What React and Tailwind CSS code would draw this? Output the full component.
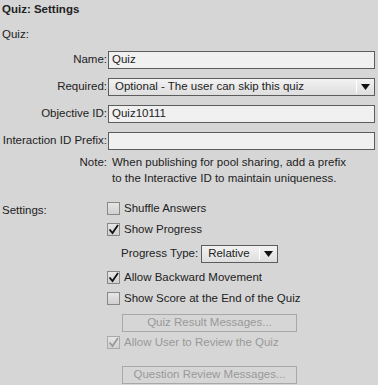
const font = { fontFamily: '"Liberation Sans", Arial, sans-serif' }

function Arrow({ dim }) {
  return (
    <svg width="9" height="6" viewBox="0 0 9 6">
      <path d="M0 0h9L4.5 6z" fill={dim ? '#999' : '#111'} />
    </svg>
  )
}

function Select({ value, className }) {
  return (
    <div className={`h-[18px] border border-[#5c5c5c] bg-gradient-to-b from-[#f2f2f2] to-[#dedede] flex items-center ${className}`}>
      <span className="flex-1 pl-[6px] truncate">{value}</span>
      <span className="w-px h-[12px] bg-[#aaa] border-r border-white"></span>
      <span className="w-[17px] flex items-center justify-center"><Arrow /></span>
    </div>
  )
}

function Check({ checked, disabled, label }) {
  return (
    <div className={`flex items-center gap-[4px] h-[21px] ${disabled ? 'text-[#999]' : ''}`}>
      <span className={`w-[13px] h-[13px] border ${disabled ? 'border-[#aaa]' : 'border-[#888]'} bg-gradient-to-b from-[#e6e6e6] to-[#d0d0d0] flex items-center justify-center`}>
        {checked && (
          <svg width="11" height="11" viewBox="0 0 11 11">
            <path d="M1.5 5.5l3 3.5L10 1" fill="none" stroke={disabled ? '#999' : '#111'} strokeWidth="1.8" />
          </svg>
        )}
      </span>
      <span>{label}</span>
    </div>
  )
}

function Row({ label, children }) {
  return (
    <div className="flex items-center h-[27px]">
      <span className="w-[106px] text-right pr-[1px] shrink-0 whitespace-nowrap">{label}</span>
      <div className="flex-1">{children}</div>
    </div>
  )
}

function Field({ value }) {
  return (
    <div className="h-[18px] border border-[#5c5c5c] bg-[#f0f0f0] flex items-center pl-[3px]">{value}</div>
  )
}

export default function App() {
  return (
    <div style={font} className="w-[378px] h-[385px] bg-[#d6d6d6] text-[11.5px] text-[#222] overflow-hidden pl-[2px] pr-[3px] whitespace-nowrap">
      <div className="font-bold h-[20px] pt-[1px]">Quiz: Settings</div>
      <div className="h-[25px] pt-[6px]">Quiz:</div>
      <div className="pt-[1px]">
        <Row label="Name:"><Field value="Quiz" /></Row>
        <Row label="Required:"><Select value="Optional - The user can skip this quiz" /></Row>
        <Row label="Objective ID:"><Field value="Quiz10111" /></Row>
        <Row label="Interaction ID Prefix:"><Field value="" /></Row>
      </div>
      <div className="flex leading-[16px]">
        <span className="w-[106px] text-right pr-[1px] shrink-0">Note:</span>
        <span className="pl-[4px]">When publishing for pool sharing, add a prefix<br />to the Interactive ID to maintain uniqueness.</span>
      </div>
      <div className="flex mt-[12px]">
        <span className="w-[105px] shrink-0 pt-[4px]">Settings:</span>
        <div className="flex flex-col">
          <Check label="Shuffle Answers" />
          <Check checked label="Show Progress" />
          <div className="flex items-center gap-[3px] h-[27px] pl-[14px]">
            <span>Progress Type:</span>
            <Select value="Relative" className="w-[77px]" />
          </div>
          <Check checked label="Allow Backward Movement" />
          <Check label="Show Score at the End of the Quiz" />
          <div className="h-[23px] flex items-end pl-[15px]">
            <div className="w-[175px] h-[18px] border border-[#a8a8a8] text-[#999] flex items-center justify-center">Quiz Result Messages...</div>
          </div>
          <Check checked disabled label="Allow User to Review the Quiz" />
          <div className="pt-[13px] pl-[15px]">
            <div className="w-[175px] h-[18px] border border-[#a8a8a8] text-[#999] flex items-center justify-center">Question Review Messages...</div>
          </div>
        </div>
      </div>
    </div>
  )
}
